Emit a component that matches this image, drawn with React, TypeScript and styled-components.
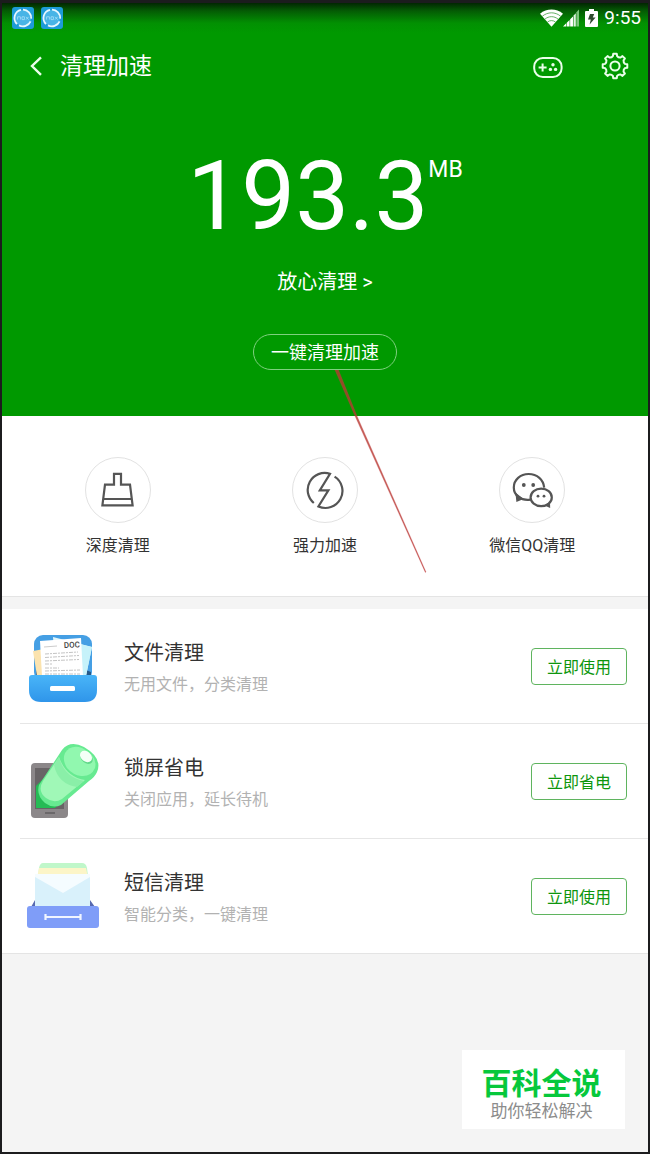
import React from 'react';
import styled, { createGlobalStyle } from 'styled-components';

const sans = "Roboto, 'Noto Sans CJK SC', sans-serif";

const GlobalStyle = createGlobalStyle`
  *, *::before, *::after { box-sizing: border-box; }
  body { margin: 0; background: #1c1c1e; }
  button { font-family: inherit; cursor: pointer; }
  svg { display: block; flex: none; }
`;

const Screen = styled.main`
  position: relative;
  min-height: 100vh;
  border: 2px solid #1c1c1e;
  border-top-width: 3px;
  background: #f4f4f4;
  font-family: ${sans};
  color: #333;
`;

const Hero = styled.header`
  display: flex;
  flex-direction: column;
  align-items: center;
  padding-bottom: 46px;
  color: #fff;
  background: linear-gradient(#022602 0, #045c04 8px, #029002 20px, #009900 30px);
`;

const StatusBar = styled.div`
  align-self: stretch;
  display: flex;
  align-items: center;
  justify-content: space-between;
  height: 30px;
  padding: 0 7px 0 10px;
`;

const StatusGroup = styled.div<{ $gap: number }>`
  display: flex;
  align-items: center;
  gap: ${(p) => p.$gap}px;
`;

const Clock = styled.time`
  font-size: 19px;
  line-height: 24px;
`;

const NavBar = styled.nav`
  align-self: stretch;
  display: flex;
  align-items: center;
  height: 66px;
  padding: 0 18px 0 24px;
`;

const IconButton = styled.button`
  display: grid;
  place-items: center;
  padding: 0;
  border: 0;
  background: none;
  color: #eaffea;
`;

const NavTitle = styled.h1`
  flex: 1;
  margin: 0 0 0 14px;
  padding-top: 2px;
  font-size: 23px;
  line-height: 32px;
  font-weight: 400;
`;

const NavActions = styled.div`
  display: flex;
  align-items: center;
  gap: 37px;
`;

const JunkSize = styled.div`
  display: flex;
  align-items: flex-start;
  margin-top: 41px;
`;

const Amount = styled.strong`
  font-size: 96px;
  line-height: 112px;
  font-weight: 400;
`;

const Unit = styled.span`
  margin-top: 16px;
  font-size: 23px;
  line-height: 28px;
`;

const DetailLink = styled.a`
  margin-top: 16px;
  font-size: 20px;
  line-height: 28px;
  color: #fff;
  text-decoration: none;
`;

const CleanButton = styled.button`
  margin-top: 38px;
  padding: 2px 17px 0;
  height: 36px;
  border: 1px solid #7fd07f;
  border-radius: 18px;
  background: none;
  color: #fff;
  font-size: 18px;
  line-height: 32px;
`;

const Features = styled.section`
  display: grid;
  grid-template-columns: repeat(3, 1fr);
  padding: 41px 12px 38px;
  border-bottom: 1px solid #e4e4e4;
  background: #fff;
`;

const Feature = styled.button`
  display: flex;
  flex-direction: column;
  align-items: center;
  gap: 11px;
  padding: 0;
  border: 0;
  background: none;
  color: #333;
  font-size: 16px;
  line-height: 24px;
`;

const FeatureDisc = styled.span`
  display: grid;
  place-items: center;
  width: 66px;
  height: 66px;
  border: 1px solid #e2e2e2;
  border-radius: 50%;
`;

const ToolList = styled.ul`
  margin: 12px 0 0;
  padding: 0 0 0 18px;
  list-style: none;
  background: #fff;
  border-bottom: 1px solid #e4e4e4;
`;

const ToolRow = styled.li`
  display: flex;
  align-items: center;
  padding: 20px 21px 20px 6px;

  & + & {
    border-top: 1px solid #e6e6e6;
  }
`;

const ToolText = styled.div`
  flex: 1;
  display: flex;
  flex-direction: column;
  gap: 6px;
  margin-left: 24px;
  padding-top: 4px;
`;

const ToolName = styled.h2`
  margin: 0;
  font-size: 20px;
  line-height: 28px;
  font-weight: 400;
`;

const ToolHint = styled.p`
  margin: 0;
  font-size: 16px;
  line-height: 24px;
  color: #b2b2b2;
`;

const ToolAction = styled.button`
  width: 96px;
  height: 37px;
  padding: 4px 0 0;
  border: 1px solid #5fb45f;
  border-radius: 4px;
  background: #fff;
  color: #0d960d;
  font-size: 16px;
  line-height: 24px;
`;

const Pointer = styled.svg`
  position: absolute;
  top: 367px;
  left: 50%;
  margin-left: 9px;
  pointer-events: none;
`;

const Badge = styled.aside`
  position: absolute;
  right: 23px;
  bottom: 23px;
  display: flex;
  flex-direction: column;
  align-items: center;
  width: 163px;
  padding: 13px 4px 8px 0;
  background: #fff;
  font-family: 'Noto Sans CJK SC', sans-serif;
`;

const BadgeTitle = styled.strong`
  font-size: 30px;
  line-height: 36px;
  font-weight: 700;
  color: #06c83c;
`;

const BadgeNote = styled.span`
  font-size: 17px;
  line-height: 22px;
  color: #8c8c8c;
`;

const EmulatorIcon = () => (
  <svg width="22" height="22" viewBox="0 0 22 22" fill="none">
    <rect width="22" height="22" rx="3" fill="#1d9bd8" />
    <circle cx="11" cy="11" r="8" fill="#48b4e6" />
    <path d="M9 2.8A8.4 8.4 0 0 0 5 17" stroke="#e6f7ff" strokeWidth="1.8" />
    <path d="M11 2.6a8.4 8.4 0 0 1 8.2 9M18.6 14.4A8.4 8.4 0 0 1 7 18.4" stroke="#e6f7ff" strokeWidth="1.8" />
    <path d="M5.6 12.6V9.8h2.800v2.800M10 9.800h2.400v2.800H10zM14 9.800l2.600 2.800M16.600 9.800L14 12.600" stroke="#a8e0f8" strokeWidth=".8" />
  </svg>
);

const WifiIcon = () => (
  <svg width="23" height="18" viewBox="0 0 24 18" fill="none">
    <path d="M0 4.6C7-1.2 17-1.2 24 4.6L12 18z" fill="#fff" />
    <path d="M2.4 7.2c5.600-4.800 13.600-4.800 19.200 0M5 10.300c4.200-3.600 9.800-3.600 14 0M7.800 13.200c2.600-2 5.800-2 8.400 0" stroke="#3a9a3a" strokeWidth=".8" />
  </svg>
);

const SignalIcon = () => (
  <svg width="16" height="18" viewBox="0 0 17 18">
    <path d="M0 18l3.400-3.400V18zM4 18v-4l3-3V18zM7.600 18v-7.600l3-3V18z" fill="#fff" />
    <path d="M11.200 18V6.400l2.400-2.400V18z" fill="#dff3df" />
    <path d="M14.200 18V3L17 0v18z" fill="#7cc47c" />
  </svg>
);

const BatteryIcon = () => (
  <svg width="13" height="18" viewBox="0 0 13 18">
    <path d="M4 0h5v2h3q1 0 1 1v14q0 1-1 1H1q-1 0-1-1V3q0-1 1-1h3z" fill="#fff" />
    <path d="M5 5h4.200L7.800 8.400h2.800L4.600 15.600l1.200-5.200H3z" fill="#2f4a2f" />
  </svg>
);

const BackIcon = () => (
  <svg width="20" height="24" viewBox="0 0 20 24" fill="none" stroke="currentColor" strokeWidth="2.4">
    <path d="M15 3.400L6 12l9 8.800" />
  </svg>
);

const GamepadIcon = () => (
  <svg width="30" height="30" viewBox="0 0 30 30" fill="none" stroke="currentColor" strokeWidth="2">
    <rect x="1.200" y="7" width="27.400" height="19" rx="8.600" />
    <path d="M5.600 16.500h8M9.600 12.500v8" />
    <g fill="currentColor" stroke="none">
      <circle cx="20" cy="13.800" r="1.700" />
      <circle cx="17.400" cy="18.400" r="1.700" />
      <circle cx="22.600" cy="18.400" r="1.700" />
    </g>
  </svg>
);

const gearPoint = (radius: number, degrees: number) => {
  const a = (degrees * Math.PI) / 180;
  return `${(15 + radius * Math.sin(a)).toFixed(2)} ${(15 - radius * Math.cos(a)).toFixed(2)}`;
};

const gearPath =
  Array.from({ length: 8 }, (_, i) => {
    const c = i * 45;
    return `${i ? 'L' : 'M'}${gearPoint(10.2, c - 12)}L${gearPoint(12.4, c - 8)}L${gearPoint(12.4, c + 8)}L${gearPoint(10.2, c + 12)}Q${gearPoint(9, c + 22.5)} ${gearPoint(10.2, c + 33)}`;
  }).join('') + 'Z';

const GearIcon = () => (
  <svg width="30" height="30" viewBox="0 0 30 30" fill="none" stroke="currentColor" strokeWidth="2" strokeLinejoin="round">
    <path d={gearPath} />
    <circle cx="15" cy="15" r="4.600" />
  </svg>
);

const BrushIcon = () => (
  <svg width="40" height="40" viewBox="0 0 40 40" fill="none" stroke="#555" strokeWidth="2.2">
    <path d="M16 14.600V3.800h7v10.800h9l2.600 20.800H4.400L7 14.600zM5.200 29h28.600" />
  </svg>
);

const BoostIcon = () => (
  <svg width="40" height="40" viewBox="1 0 40 40" fill="none" stroke="#555" strokeWidth="2.2">
    <path d="M9.800 33A17 17 0 0 1 26 3.800L15.800 20.400h8.600L14.400 36.400A17 17 0 0 0 30.600 6.600" />
  </svg>
);

const ChatIcon = () => (
  <svg width="44" height="40" viewBox="0 0 44 40" fill="none" stroke="#555" strokeWidth="2.2">
    <path d="M20.400 29.600C10.600 31 3.800 25 3.800 17.400 3.800 9.800 10.400 4 18.600 4c8.600 0 14.800 5.600 15.600 13.600" />
    <path d="M5.400 22.600l8.200 6.400-7.200 3z" fill="#555" stroke="none" />
    <ellipse cx="31.200" cy="27.400" rx="10.600" ry="8.800" />
    <g fill="#555" stroke="none">
      <circle cx="13.800" cy="15" r="1.900" />
      <circle cx="23.200" cy="15" r="1.900" />
      <circle cx="28" cy="26.200" r="1.400" />
      <circle cx="34" cy="26.200" r="1.400" />
      <path d="M34.400 35.400l5.600-3.400.2 6z" />
    </g>
  </svg>
);

const FilesArt = () => (
  <svg width="74" height="74" viewBox="0 -1 74 74">
    <defs>
      <linearGradient id="drawer" x1="0" y1="0" x2="0" y2="1">
        <stop offset="0" stopColor="#49b5f8" />
        <stop offset="1" stopColor="#2f95ea" />
      </linearGradient>
    </defs>
    <rect x="8" y="5" width="58" height="46" rx="9" fill="#459fe4" />
    <path d="M10 40l4-2v8h-4zM60 40l5 2v4h-5z" fill="#24598a" />
    <path d="M7 21l11-2 4 27H11z" fill="#fbe3ae" />
    <path d="M27 7l39 10-6 29H30z" fill="#dff6fb" />
    <path d="M54 14l12 3-6 29h-6z" fill="#c6f2fa" />
    <path d="M14 11l41-3 2 38H16z" fill="#fff" />
    <path d="M18 17l13-1" stroke="#ccc" strokeWidth="1" />
    <path d="M19 24l33-2M19 27.500l34-2M19 31l34-1.500M19 34h8M19 38h14M19 41l35-1M19 44h35" stroke="#c4c4c4" strokeWidth="1" strokeDasharray="4 1 2 1" />
    <text x="38" y="18" fontFamily="Roboto, sans-serif" fontSize="8" fontWeight="500" fill="#444" transform="rotate(-3 38 18)">DOC</text>
    <path d="M6 45h62q3 0 3 3v12q0 12-12 12H15Q3 72 3 60V48q0-3 3-3z" fill="url(#drawer)" />
    <rect x="24" y="56" width="25" height="5" rx="1.500" fill="#fff" />
  </svg>
);

const BatteryArt = () => (
  <svg width="74" height="74" viewBox="0 0 74 74">
    <rect x="5" y="19" width="37" height="55" rx="4" fill="#8b8789" />
    <rect x="9" y="24" width="29" height="41" fill="#686466" />
    <rect x="19" y="68" width="10" height="2" fill="#6b686a" />
    <path d="M10 42l8-8 18 22-7 8H10z" fill="#25bb55" />
    <path d="M13 41L36 6Q44-4 58 3q19 11 13 25-2 5-8 9L35 61q-8 4-16-2-9-8-6-18z" fill="#67ea91" />
    <path d="M33 13L17 37q-6 10 3 17 8 6 16 1l23-19Q40 33 33 13z" fill="#a0f8b7" />
    <path d="M33 13q5 20 25 24l-7 6Q32 40 28 21z" fill="#8aefa8" />
    <path d="M39 9Q45 0 56 4q16 8 13 20-4 9-14 8-8-1-14-8-5-8-2-15z" fill="#91f8af" />
    <ellipse cx="60.500" cy="14" rx="7" ry="5" transform="rotate(40 60.500 14)" fill="#62d98a" />
    <ellipse cx="60" cy="12.500" rx="6.600" ry="5" transform="rotate(40 60 12.500)" fill="#f4fff6" />
  </svg>
);

const MessagesArt = () => (
  <svg width="74" height="74" viewBox="0 0 74 74">
    <path d="M5 48l4-7v8H5zM64 41l5 7v1h-5z" fill="#5769b0" />
    <path d="M17 4h39q4 0 5 5l1 8H12l1-8q1-5 4-5z" fill="#c0f7ca" />
    <path d="M13 9h47l2 10H11z" fill="#fcf5c8" />
    <path d="M9 15h55v35H9z" fill="#d9f1fb" />
    <path d="M9 15h55v3L37 34 9 18z" fill="#f5fcff" />
    <rect x="1" y="47" width="72" height="22" rx="3" fill="#7f9df8" />
    <path d="M19 58h36M19.500 55v6M54.500 55v6" stroke="#f1f5ff" strokeWidth="2.200" />
  </svg>
);

const features = [
  { name: '深度清理', Icon: BrushIcon },
  { name: '强力加速', Icon: BoostIcon },
  { name: '微信QQ清理', Icon: ChatIcon },
];

const tools = [
  { name: '文件清理', hint: '无用文件，分类清理', action: '立即使用', Art: FilesArt },
  { name: '锁屏省电', hint: '关闭应用，延长待机', action: '立即省电', Art: BatteryArt },
  { name: '短信清理', hint: '智能分类，一键清理', action: '立即使用', Art: MessagesArt },
];

export default function App() {
  return (
    <>
      <GlobalStyle />
      <Screen lang="zh-CN">
        <Hero>
          <StatusBar>
            <StatusGroup $gap={7}>
              <EmulatorIcon />
              <EmulatorIcon />
            </StatusGroup>
            <StatusGroup $gap={6}>
              <StatusGroup $gap={0}>
                <WifiIcon />
                <SignalIcon />
              </StatusGroup>
              <BatteryIcon />
              <Clock>9:55</Clock>
            </StatusGroup>
          </StatusBar>
          <NavBar>
            <IconButton aria-label="返回"><BackIcon /></IconButton>
            <NavTitle>清理加速</NavTitle>
            <NavActions>
              <IconButton aria-label="游戏"><GamepadIcon /></IconButton>
              <IconButton aria-label="设置"><GearIcon /></IconButton>
            </NavActions>
          </NavBar>
          <JunkSize>
            <Amount>193.3</Amount>
            <Unit>MB</Unit>
          </JunkSize>
          <DetailLink href="#detail">放心清理 &gt;</DetailLink>
          <CleanButton>一键清理加速</CleanButton>
        </Hero>
        <Features>
          {features.map(({ name, Icon }) => (
            <Feature key={name}>
              <FeatureDisc><Icon /></FeatureDisc>
              {name}
            </Feature>
          ))}
        </Features>
        <ToolList>
          {tools.map(({ name, hint, action, Art }) => (
            <ToolRow key={name}>
              <Art />
              <ToolText>
                <ToolName>{name}</ToolName>
                <ToolHint>{hint}</ToolHint>
              </ToolText>
              <ToolAction>{action}</ToolAction>
            </ToolRow>
          ))}
        </ToolList>
        <Pointer width="94" height="204" viewBox="0 0 94 204">
          <path d="M1 0L4.500 0L23 46L92 202L91.300 202.400L21 46z" fill="#b83a30" fillOpacity=".8" stroke="#c8404a" strokeOpacity=".5" strokeWidth=".5" />
        </Pointer>
        <Badge>
          <BadgeTitle>百科全说</BadgeTitle>
          <BadgeNote>助你轻松解决</BadgeNote>
        </Badge>
      </Screen>
    </>
  );
}
